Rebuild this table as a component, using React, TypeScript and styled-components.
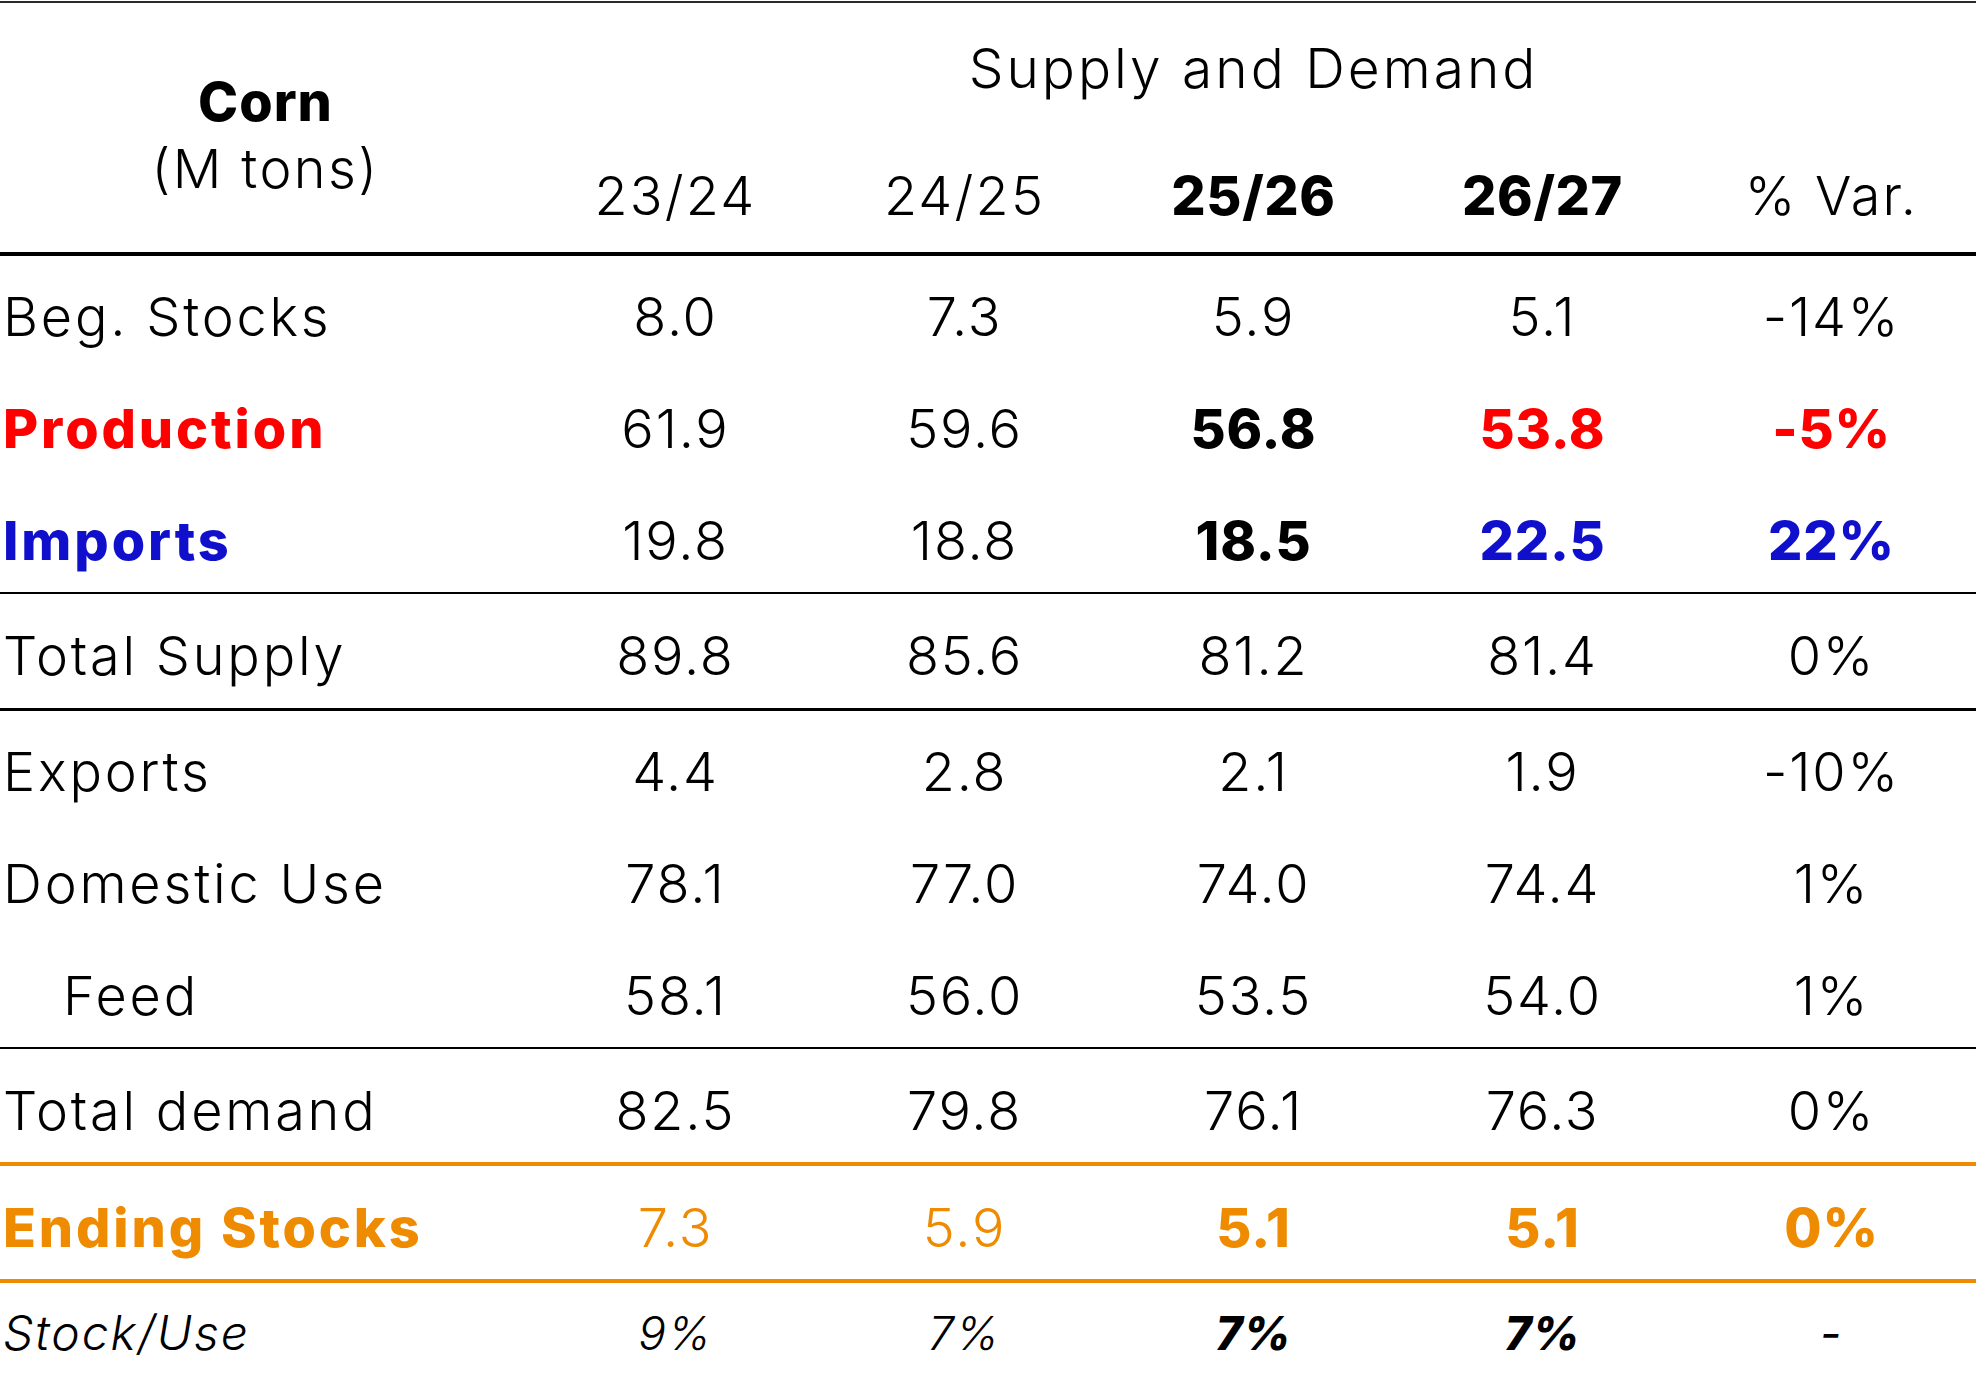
import React from "react";
import styled, { createGlobalStyle } from "styled-components";

const GlobalStyle = createGlobalStyle`
  html, body { margin: 0; padding: 0; background: #ffffff; }
  body { font-family: Inter, "Noto Sans", sans-serif; color: #000; }
`;

const COLS = "531px repeat(5, 289px)";

const tones: Record<string, string> = {
  black: "#000000",
  red: "#ff0000",
  blue: "#1010cc",
  orange: "#ee8b00",
};

type Tone = "black" | "red" | "blue" | "orange";

const Page = styled.div`
  width: 1976px;
  padding-top: 1px;
`;

const Table = styled.div`
  width: 1976px;
  border-top: 2px solid #2a2a2a;
`;

const Header = styled.div`
  display: grid;
  grid-template-columns: ${COLS};
  grid-template-rows: 130px 119px;
  border-bottom: 4px solid #000;
`;

const TitleCell = styled.div`
  grid-row: 1 / 3;
  grid-column: 1;
  display: flex;
  flex-direction: column;
  align-items: center;
  padding-top: 65px;
  box-sizing: border-box;
`;

const TitleLine = styled.span<{ $bold?: boolean }>`
  font-size: 54px;
  line-height: 67px;
  font-weight: ${(p) => (p.$bold ? 800 : 300)};
  letter-spacing: ${(p) => (p.$bold ? "1px" : "2.4px")};
  white-space: nowrap;
`;

const GroupTitle = styled.div`
  grid-row: 1;
  grid-column: 2 / 7;
  display: flex;
  align-items: center;
  justify-content: center;
  font-size: 55px;
  line-height: 1;
  font-weight: 300;
  letter-spacing: 3px;
  white-space: nowrap;
`;

const YearCell = styled.div<{ $bold?: boolean }>`
  grid-row: 2;
  display: flex;
  align-items: center;
  justify-content: center;
  padding-top: 7px;
  box-sizing: border-box;
  font-size: 54px;
  line-height: 1;
  font-weight: ${(p) => (p.$bold ? 800 : 300)};
  letter-spacing: ${(p) => (p.$bold ? "0.6px" : "2.2px")};
  white-space: nowrap;
`;

const Row = styled.div<{ $h: number; $rule?: string; $pad?: number }>`
  display: grid;
  grid-template-columns: ${COLS};
  height: ${(p) => p.$h}px;
  box-sizing: content-box;
  border-bottom: ${(p) => p.$rule ?? "none"};
  & > * {
    padding-top: ${(p) => p.$pad ?? 10}px;
  }
`;

const Label = styled.div<{ $tone: Tone; $bold?: boolean; $italic?: boolean; $indent?: boolean }>`
  display: flex;
  align-items: center;
  box-sizing: border-box;
  padding-left: ${(p) => (p.$indent ? 63 : 3)}px;
  font-size: ${(p) => (p.$italic ? 48 : 54)}px;
  line-height: 1;
  font-weight: ${(p) => (p.$bold ? 800 : 300)};
  font-style: ${(p) => (p.$italic ? "italic" : "normal")};
  letter-spacing: ${(p) => (p.$bold ? "2.9px" : p.$italic ? "2px" : "2.8px")};
  color: ${(p) => tones[p.$tone]};
  white-space: nowrap;
`;

const Value = styled.div<{ $tone: Tone; $bold?: boolean; $italic?: boolean; $plain?: boolean }>`
  display: flex;
  align-items: center;
  justify-content: center;
  box-sizing: border-box;
  font-size: ${(p) => (p.$italic ? 46 : 54)}px;
  line-height: 1;
  font-weight: ${(p) => (p.$bold ? 800 : p.$plain ? 400 : 300)};
  font-style: ${(p) => (p.$italic ? "italic" : "normal")};
  letter-spacing: ${(p) => (p.$bold ? "0.8px" : "1.8px")};
  color: ${(p) => tones[p.$tone]};
  white-space: nowrap;
`;

type Cell = { v: string; tone?: Tone; bold?: boolean; plain?: boolean };

type RowData = {
  label: string;
  tone: Tone;
  bold?: boolean;
  italic?: boolean;
  indent?: boolean;
  h: number;
  pad?: number;
  rule?: string;
  cells: Cell[];
};

const thin = "2px solid #000";
const thick = "3px solid #000";
const orange = `4px solid ${tones.orange}`;

const rows: RowData[] = [
  {
    label: "Beg. Stocks",
    tone: "black",
    h: 112,
    cells: [{ v: "8.0" }, { v: "7.3" }, { v: "5.9" }, { v: "5.1" }, { v: "-14%" }],
  },
  {
    label: "Production",
    tone: "red",
    bold: true,
    h: 112,
    cells: [
      { v: "61.9" },
      { v: "59.6" },
      { v: "56.8", bold: true },
      { v: "53.8", bold: true, tone: "red" },
      { v: "-5%", bold: true, tone: "red" },
    ],
  },
  {
    label: "Imports",
    tone: "blue",
    bold: true,
    h: 112,
    rule: thin,
    cells: [
      { v: "19.8" },
      { v: "18.8" },
      { v: "18.5", bold: true },
      { v: "22.5", bold: true, tone: "blue" },
      { v: "22%", bold: true, tone: "blue" },
    ],
  },
  {
    label: "Total Supply",
    tone: "black",
    h: 114,
    rule: thick,
    cells: [{ v: "89.8" }, { v: "85.6" }, { v: "81.2" }, { v: "81.4" }, { v: "0%" }],
  },
  {
    label: "Exports",
    tone: "black",
    h: 112,
    cells: [{ v: "4.4" }, { v: "2.8" }, { v: "2.1" }, { v: "1.9" }, { v: "-10%" }],
  },
  {
    label: "Domestic Use",
    tone: "black",
    h: 112,
    cells: [{ v: "78.1" }, { v: "77.0" }, { v: "74.0" }, { v: "74.4" }, { v: "1%" }],
  },
  {
    label: "Feed",
    tone: "black",
    indent: true,
    h: 112,
    rule: thin,
    cells: [{ v: "58.1" }, { v: "56.0" }, { v: "53.5" }, { v: "54.0" }, { v: "1%" }],
  },
  {
    label: "Total demand",
    tone: "black",
    h: 113,
    rule: orange,
    cells: [{ v: "82.5" }, { v: "79.8" }, { v: "76.1" }, { v: "76.3" }, { v: "0%" }],
  },
  {
    label: "Ending Stocks",
    tone: "orange",
    bold: true,
    h: 113,
    rule: orange,
    cells: [
      { v: "7.3", tone: "orange" },
      { v: "5.9", tone: "orange" },
      { v: "5.1", bold: true, tone: "orange" },
      { v: "5.1", bold: true, tone: "orange" },
      { v: "0%", bold: true, tone: "orange" },
    ],
  },
  {
    label: "Stock/Use",
    tone: "black",
    italic: true,
    h: 100,
    pad: 0,
    cells: [
      { v: "9%" },
      { v: "7%" },
      { v: "7%", bold: true },
      { v: "7%", bold: true },
      { v: "-", plain: true },
    ],
  },
];

const years = [
  { y: "23/24" },
  { y: "24/25" },
  { y: "25/26", bold: true },
  { y: "26/27", bold: true },
  { y: "% Var." },
];

export default function App() {
  return (
    <Page>
      <GlobalStyle />
      <Table>
        <Header>
          <TitleCell>
            <TitleLine $bold>Corn</TitleLine>
            <TitleLine>(M tons)</TitleLine>
          </TitleCell>
          <GroupTitle>Supply and Demand</GroupTitle>
          {years.map((c) => (
            <YearCell key={c.y} $bold={c.bold}>
              {c.y}
            </YearCell>
          ))}
        </Header>
        {rows.map((r) => (
          <Row key={r.label} $h={r.h} $rule={r.rule} $pad={r.pad}>
            <Label $tone={r.tone} $bold={r.bold} $italic={r.italic} $indent={r.indent}>
              {r.label}
            </Label>
            {r.cells.map((c, i) => (
              <Value
                key={i}
                $tone={c.tone ?? "black"}
                $bold={c.bold}
                $italic={r.italic}
                $plain={c.plain}
              >
                {c.v}
              </Value>
            ))}
          </Row>
        ))}
      </Table>
    </Page>
  );
}
